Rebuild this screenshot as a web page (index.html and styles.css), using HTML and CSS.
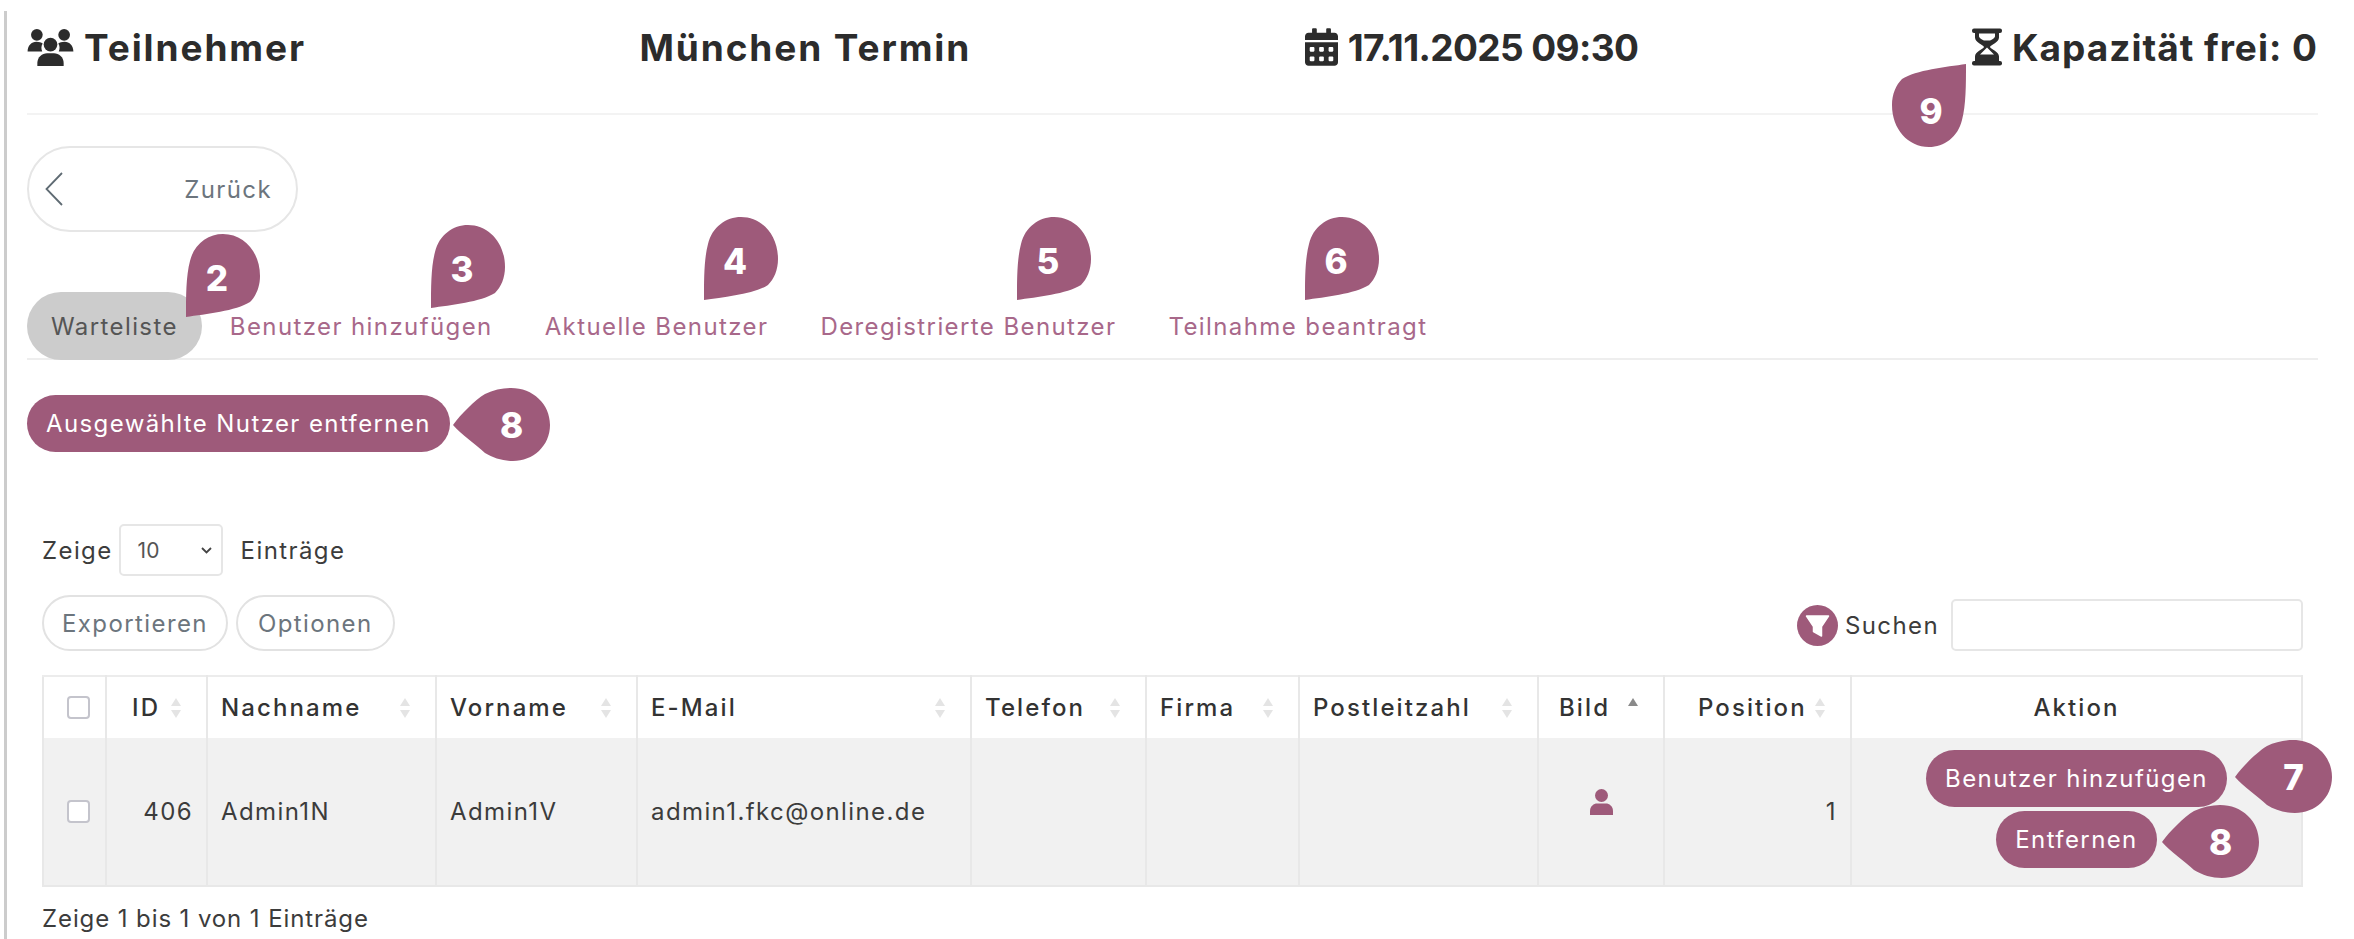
FILE: index.html
```html
<!DOCTYPE html>
<html lang="de">
<head>
    <meta charset="UTF-8">
    <title>Teilnehmer - München Termin</title>
    <link rel="stylesheet" href="styles.css">
</head>
<body>
    <div class="page">
        <header class="top">
            <h2 class="top-item">
                <svg class="icon-users" viewBox="0 0 47 39"><circle cx="9.500" cy="7" r="6"/><circle cx="37.500" cy="7" r="6"/><circle cx="23.500" cy="17" r="7"/><path d="M0 24c0-6 4-10 9-10 3 0 5 .7 6.500 2-1.500 2.300-1.800 5.500-.5 8z"/><path d="M47 24c0-6-4-10-9-10-3 0-5 .7-6.500 2 1.500 2.300 1.800 5.500.5 8z"/><path d="M10 39v-3c0-6 5-10 10-10h7c5 0 10 4 10 10v3z"/></svg>
                Teilnehmer
            </h2>
            <h2 class="top-item">München Termin</h2>
            <h2 class="top-item date">
                <svg class="icon-cal" viewBox="0 0 448 512"><path d="M0 464c0 26.5 21.5 48 48 48h352c26.5 0 48-21.5 48-48V192H0v272zm320-196c0-6.6 5.4-12 12-12h40c6.6 0 12 5.4 12 12v40c0 6.6-5.4 12-12 12h-40c-6.6 0-12-5.4-12-12v-40zm0 128c0-6.6 5.4-12 12-12h40c6.6 0 12 5.4 12 12v40c0 6.6-5.4 12-12 12h-40c-6.6 0-12-5.4-12-12v-40zM192 268c0-6.6 5.4-12 12-12h40c6.6 0 12 5.4 12 12v40c0 6.6-5.4 12-12 12h-40c-6.6 0-12-5.4-12-12v-40zm0 128c0-6.6 5.4-12 12-12h40c6.6 0 12 5.4 12 12v40c0 6.6-5.4 12-12 12h-40c-6.6 0-12-5.4-12-12v-40zM64 268c0-6.6 5.4-12 12-12h40c6.6 0 12 5.4 12 12v40c0 6.6-5.4 12-12 12H76c-6.6 0-12-5.4-12-12v-40zm0 128c0-6.6 5.4-12 12-12h40c6.6 0 12 5.4 12 12v40c0 6.6-5.4 12-12 12H76c-6.6 0-12-5.4-12-12v-40zM400 64h-48V16c0-8.8-7.2-16-16-16h-32c-8.8 0-16 7.2-16 16v48H160V16c0-8.8-7.2-16-16-16h-32c-8.8 0-16 7.2-16 16v48H48C21.5 64 0 85.5 0 112v48h448v-48c0-26.5-21.5-48-48-48z"/></svg>
                17.11.2025 09:30
            </h2>
            <h2 class="top-item capacity">
                <svg class="icon-hour" viewBox="0 0 30 37"><rect width="30" height="4.500" rx="2"/><rect y="32.500" width="30" height="4.500" rx="2"/><path fill-rule="evenodd" d="M3 4h24v5c0 5-8 7-9 9.500 1 2.500 9 4.500 9 9.500v5H3v-5c0-5 8-7 9-9.500C11 16 3 14 3 9zM7 5v3c0 1.500 3 3 5 4h6c2-1 5-2.500 5-4V5zM15 19l-7 7h14z"/></svg>
                Kapazität frei: 0
            </h2>
        </header>

        <a class="back-btn" href="#">
            <svg class="icon-back" viewBox="0 0 18 34"><path d="M17 1 1.5 17 17 33" fill="none" stroke="#5f6b73" stroke-width="1.8"/></svg>
            <span>Zurück</span>
        </a>

        <nav class="tabs">
            <a class="tab active" href="#">Warteliste</a>
            <a class="tab" href="#">Benutzer hinzufügen</a>
            <a class="tab" href="#">Aktuelle Benutzer</a>
            <a class="tab" href="#">Deregistrierte Benutzer</a>
            <a class="tab" href="#">Teilnahme beantragt</a>
        </nav>

        <button class="btn remove-selected">Ausgewählte Nutzer entfernen</button>

        <section class="list">
            <div class="length">
                <span>Zeige</span>
                <select class="length-select"><option>10</option></select>
                <span class="length-after">Einträge</span>
            </div>

            <div class="tools">
                <div class="tool-btns">
                    <button class="btn-outline">Exportieren</button>
                    <button class="btn-outline btn-options">Optionen</button>
                </div>
                <label class="search">
                    <svg class="icon-filter" viewBox="0 0 41 41"><circle cx="20.500" cy="20.500" r="20.500" fill="#9e5a7a"/><path d="M9.500 11h22l-7 10.500V31l-8-4.500v-5z" fill="#fff" stroke="#fff" stroke-width="1.500" stroke-linejoin="round"/></svg>
                    <span>Suchen</span>
                    <input class="search-input" type="text">
                </label>
            </div>

            <table class="data">
                <colgroup>
                    <col class="c-check"><col class="c-id"><col class="c-last"><col class="c-first"><col class="c-mail">
                    <col class="c-phone"><col class="c-firm"><col class="c-zip"><col class="c-pic"><col class="c-pos"><col>
                </colgroup>
                <thead>
                    <tr>
                        <th class="center"><input class="check" type="checkbox"></th>
                        <th class="th-id"><div class="th-in">ID<i class="sort"></i></div></th>
                        <th><div class="th-in">Nachname<i class="sort"></i></div></th>
                        <th><div class="th-in">Vorname<i class="sort"></i></div></th>
                        <th><div class="th-in">E-Mail<i class="sort"></i></div></th>
                        <th><div class="th-in">Telefon<i class="sort"></i></div></th>
                        <th><div class="th-in">Firma<i class="sort"></i></div></th>
                        <th><div class="th-in">Postleitzahl<i class="sort"></i></div></th>
                        <th class="th-pic"><div class="th-in">Bild<i class="sort asc"></i></div></th>
                        <th class="th-pos"><div class="th-in">Position<i class="sort"></i></div></th>
                        <th class="center">Aktion</th>
                    </tr>
                </thead>
                <tbody>
                    <tr>
                        <td class="center"><input class="check" type="checkbox"></td>
                        <td class="right">406</td>
                        <td>Admin1N</td>
                        <td>Admin1V</td>
                        <td>admin1.fkc@online.de</td>
                        <td></td>
                        <td></td>
                        <td></td>
                        <td class="center pic">
                            <svg class="icon-user" viewBox="0 0 23 26"><circle cx="11.500" cy="6.500" r="6.500"/><path d="M0 26v-4c0-5 4-7.500 7-7.500h9c3 0 7 2.500 7 7.500v4z"/></svg>
                        </td>
                        <td class="right">1</td>
                        <td class="actions">
                            <button class="btn">Benutzer hinzufügen</button>
                            <button class="btn">Entfernen</button>
                        </td>
                    </tr>
                </tbody>
            </table>

            <p class="info">Zeige 1 bis 1 von 1 Einträge</p>
        </section>
    </div>

    <!-- Nummern-Marker der Anleitung -->
    <div class="marker drop m2"><svg viewBox="0 0 74 83"><path d="M0 83C0 62 0 42 4 27 8 10 22 0 37 0c21 0 37 18 37 42 0 11-4 20-10 26C50 77 20 80 0 83z"/></svg><b>2</b></div>
    <div class="marker drop m3"><svg viewBox="0 0 74 83"><path d="M0 83C0 62 0 42 4 27 8 10 22 0 37 0c21 0 37 18 37 42 0 11-4 20-10 26C50 77 20 80 0 83z"/></svg><b>3</b></div>
    <div class="marker drop m4"><svg viewBox="0 0 74 83"><path d="M0 83C0 62 0 42 4 27 8 10 22 0 37 0c21 0 37 18 37 42 0 11-4 20-10 26C50 77 20 80 0 83z"/></svg><b>4</b></div>
    <div class="marker drop m5"><svg viewBox="0 0 74 83"><path d="M0 83C0 62 0 42 4 27 8 10 22 0 37 0c21 0 37 18 37 42 0 11-4 20-10 26C50 77 20 80 0 83z"/></svg><b>5</b></div>
    <div class="marker drop m6"><svg viewBox="0 0 74 83"><path d="M0 83C0 62 0 42 4 27 8 10 22 0 37 0c21 0 37 18 37 42 0 11-4 20-10 26C50 77 20 80 0 83z"/></svg><b>6</b></div>
    <div class="marker side m8a"><svg viewBox="0 0 97 73"><path d="M0 37C8 26 22 12 32 6 40 2 50 0 58 0c22 0 39 16 39 37S80 73 60 73c-10 0-20-3-28-8C22 56 8 46 0 37z"/></svg><b>8</b></div>
    <div class="marker side m7"><svg viewBox="0 0 97 73"><path d="M0 37C8 26 22 12 32 6 40 2 50 0 58 0c22 0 39 16 39 37S80 73 60 73c-10 0-20-3-28-8C22 56 8 46 0 37z"/></svg><b>7</b></div>
    <div class="marker side m8b"><svg viewBox="0 0 97 73"><path d="M0 37C8 26 22 12 32 6 40 2 50 0 58 0c22 0 39 16 39 37S80 73 60 73c-10 0-20-3-28-8C22 56 8 46 0 37z"/></svg><b>8</b></div>
    <div class="marker up m9"><svg viewBox="0 0 74 83"><path d="M0 83C0 62 0 42 4 27 8 10 22 0 37 0c21 0 37 18 37 42 0 11-4 20-10 26C50 77 20 80 0 83z"/></svg><b>9</b></div>
</body>
</html>
```

FILE: styles.css
```css
html, body {
    margin: 0;
    height: 100%;
    overflow: hidden;
    background: #fff;
}
body {
    font-family: Inter, "Liberation Sans", sans-serif;
    font-size: 24px;
    letter-spacing: 1.4px;
    color: #3c3c3c;
}
.page {
    margin: 11px 0 0 4px;
    border-left: 3px solid #ccc;
    padding: 0 36px 0 20px;
    height: 928px;
    box-sizing: border-box;
}

/* Kopfzeile */
.top {
    display: flex;
    justify-content: space-between;
    padding: 11px 0 41px;
    border-bottom: 2px solid #f3f3f3;
}
.top-item {
    display: flex;
    align-items: center;
    gap: 10px;
    margin: 0;
    height: 50px;
    font-size: 37px;
    font-weight: 700;
    letter-spacing: 1.9px;
    color: #2c2c2c;
}
.top-item.date { letter-spacing: -0.6px; }
.top-item.capacity { letter-spacing: 1px; }
.top-item svg {
    fill: #2c2c2c;
    height: 38px;
}
.icon-users { width: 47px; }
.icon-cal { width: 33px; }
.icon-hour { width: 30px; }

.back-btn {
    display: flex;
    align-items: center;
    justify-content: space-between;
    box-sizing: border-box;
    width: 271px;
    height: 86px;
    margin-top: 31px;
    padding: 0 24px 0 16px;
    border: 2px solid #e6e6e6;
    border-radius: 43px;
    color: #6c757d;
    text-decoration: none;
}
.icon-back {
    width: 18px;
    height: 34px;
}

/* Tabs */
.tabs {
    display: flex;
    margin-top: 60px;
    border-bottom: 2px solid #eee;
    height: 66px;
}
.tab {
    display: flex;
    align-items: center;
    height: 68px;
    padding: 0 26px;
    color: #a8688a;
    text-decoration: none;
}
.tab.active {
    padding: 0 24px;
    margin-right: 2px;
    background: #ccc;
    color: #555;
    border-radius: 34px;
}

/* Buttons */
.btn {
    display: block;
    height: 57px;
    padding: 0 19px;
    border: none;
    border-radius: 29px;
    background: #9e5a7a;
    color: #fff;
    font: inherit;
    letter-spacing: inherit;
}
.remove-selected {
    margin-top: 35px;
}
.btn-outline {
    height: 56px;
    padding: 0 18px;
    border: 2px solid #e2e2e2;
    border-radius: 28px;
    background: #fff;
    color: #6c757d;
    font: inherit;
    letter-spacing: inherit;
}
.btn-options {
    padding: 0 20px;
}

/* Liste */
.list {
    padding: 0 15px;
}
.length {
    display: flex;
    align-items: center;
    margin-top: 72px;
    height: 52px;
}
.length-select {
    appearance: none;
    box-sizing: border-box;
    width: 104px;
    height: 52px;
    margin-left: 6px;
    padding-left: 17px;
    border: 2px solid #e6e6e6;
    border-radius: 5px;
    background: #fff url("data:image/svg+xml,%3Csvg xmlns='http://www.w3.org/2000/svg' viewBox='0 0 11 7'%3E%3Cpath d='M1 1l4.500 4.500L10 1' fill='none' stroke='%23444' stroke-width='1.800'/%3E%3C/svg%3E") no-repeat right 9px center / 11px 7px;
    color: #555;
    font: 21px Inter, sans-serif;
}
.length-after {
    margin-left: 18px;
}
.tools {
    display: flex;
    justify-content: space-between;
    align-items: flex-end;
    margin-top: 19px;
}
.tool-btns {
    display: flex;
    gap: 8px;
}
.search {
    display: flex;
    align-items: center;
    gap: 7px;
}
.icon-filter {
    width: 41px;
    height: 41px;
}
.search-input {
    box-sizing: border-box;
    width: 352px;
    height: 52px;
    margin-left: 5px;
    border: 2px solid #e6e6e6;
    border-radius: 5px;
}

/* Tabelle */
.data {
    width: 2261px;
    margin-top: 24px;
    table-layout: fixed;
    border-collapse: collapse;
    border: 2px solid #ececec;
}
.c-check { width: 63px; }
.c-id { width: 101px; }
.c-last { width: 229px; }
.c-first { width: 201px; }
.c-mail { width: 334px; }
.c-phone { width: 175px; }
.c-firm { width: 153px; }
.c-zip { width: 239px; }
.c-pic { width: 126px; }
.c-pos { width: 187px; }
.data th, .data td {
    padding: 0 13px;
    border: 2px solid #e8e8e8;
    text-align: left;
    white-space: nowrap;
}
.data th {
    height: 61px;
    border-top-color: #ececec;
    border-bottom: none;
    font-weight: 500;
    letter-spacing: 2.1px;
    color: #333;
}
.data td {
    box-sizing: border-box;
    height: 148px;
    background: #f1f1f1;
    border-top: none;
}
.data .center { text-align: center; }
.data .right { text-align: right; }
.th-in {
    display: flex;
    align-items: center;
    justify-content: space-between;
    padding-right: 12px;
}
.data .th-id { padding-left: 25px; }
.data .th-pic { padding-left: 20px; }
.data .th-pos { padding-left: 33px; }
.sort {
    position: relative;
    display: block;
    width: 10px;
    height: 22px;
    flex: none;
}
.sort::before, .sort::after {
    content: "";
    position: absolute;
    left: 0;
    border-left: 5px solid transparent;
    border-right: 5px solid transparent;
}
.sort::before {
    top: 1px;
    border-bottom: 8px solid #e4e4e4;
}
.sort::after {
    bottom: 1px;
    border-top: 8px solid #e4e4e4;
}
.sort.asc::before { border-bottom-color: #8a8a8a; }
.sort.asc::after { border-top-color: transparent; }
.check {
    appearance: none;
    box-sizing: border-box;
    display: block;
    width: 23px;
    height: 23px;
    margin: 0 0 0 10px;
    border: 2px solid #c4c4cc;
    border-radius: 4px;
    background: #fff;
}
.data .pic { padding-bottom: 22px; }
.icon-user {
    width: 23px;
    height: 26px;
    fill: #9e5a7a;
    vertical-align: middle;
}
.data .actions { padding-bottom: 6px; }
.actions .btn {
    margin: 0 auto;
}
.actions .btn + .btn {
    margin-top: 4px;
}
.info {
    margin: 17px 0 0;
    letter-spacing: 0.9px;
}

/* Marker */
.marker {
    position: absolute;
    display: flex;
    align-items: center;
    justify-content: center;
    color: #fff;
    font-size: 35px;
    letter-spacing: 0;
}
.marker svg {
    position: absolute;
    top: 0;
    left: 0;
    width: 100%;
    height: 100%;
    fill: #9e5a7a;
}
.marker b {
    position: relative;
    font-weight: 800;
}
.drop {
    width: 74px;
    height: 83px;
    padding: 5px 12px 0 0;
    box-sizing: border-box;
}
.side {
    width: 97px;
    height: 73px;
    padding-left: 20px;
    box-sizing: border-box;
}
.up {
    width: 74px;
    height: 85px;
    box-sizing: border-box;
    padding: 10px 0 0 4px;
}
.up svg { transform: rotate(180deg); }
.m2 { left: 186px; top: 234px; }
.m3 { left: 431px; top: 225px; }
.m4 { left: 704px; top: 217px; }
.m5 { left: 1017px; top: 217px; }
.m6 { left: 1305px; top: 217px; }
.m7 { left: 2235px; top: 740px; }
.m8a { left: 453px; top: 388px; }
.m8b { left: 2162px; top: 805px; }
.m9 { left: 1892px; top: 63px; }
```
